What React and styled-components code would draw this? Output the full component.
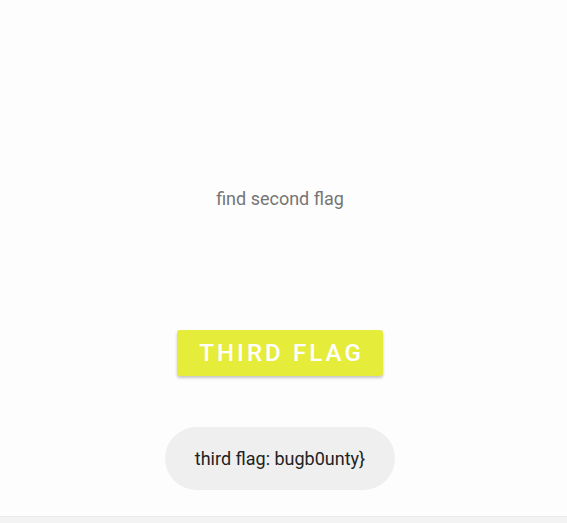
import React from "react";
import styled, { createGlobalStyle } from "styled-components";

const GlobalStyle = createGlobalStyle`
  html, body {
    margin: 0;
    padding: 0;
    background: #fdfdfd;
    font-family: Roboto, "Noto Sans", sans-serif;
  }
`;

const Screen = styled.div`
  width: 567px;
  height: 523px;
  display: flex;
  flex-direction: column;
  overflow: hidden;
`;

const Content = styled.main`
  height: 516px;
  display: flex;
  flex-direction: column;
  align-items: center;
  padding-right: 7px;
  box-sizing: border-box;
`;

const Hint = styled.p`
  margin: 187px 0 0;
  font-size: 18px;
  line-height: 24px;
  color: #757575;
`;

const FlagButton = styled.button`
  margin-top: 119px;
  width: 206px;
  height: 46px;
  border: none;
  border-radius: 3px;
  background: #e6ec3a;
  color: #ffffff;
  font-family: Roboto, "Noto Sans", sans-serif;
  font-size: 24px;
  font-weight: 500;
  letter-spacing: 3.1px;
  padding: 0 0 0 3px;
  box-shadow: 0 2px 3px rgba(0, 0, 0, 0.22);
  cursor: pointer;
`;

const Toast = styled.div`
  margin-top: 51px;
  width: 230px;
  height: 63px;
  border-radius: 32px;
  background: #efefef;
  display: flex;
  align-items: center;
  justify-content: center;
  font-size: 18px;
  color: #222222;
`;

const NavStrip = styled.div`
  flex: 1;
  background: #f3f3f3;
  border-top: 1px solid #ececec;
`;

export default function App() {
  return (
    <>
      <GlobalStyle />
      <Screen>
        <Content>
          <Hint>find second flag</Hint>
          <FlagButton>THIRD FLAG</FlagButton>
          <Toast>third flag: bugb0unty&#125;</Toast>
        </Content>
        <NavStrip />
      </Screen>
    </>
  );
}
